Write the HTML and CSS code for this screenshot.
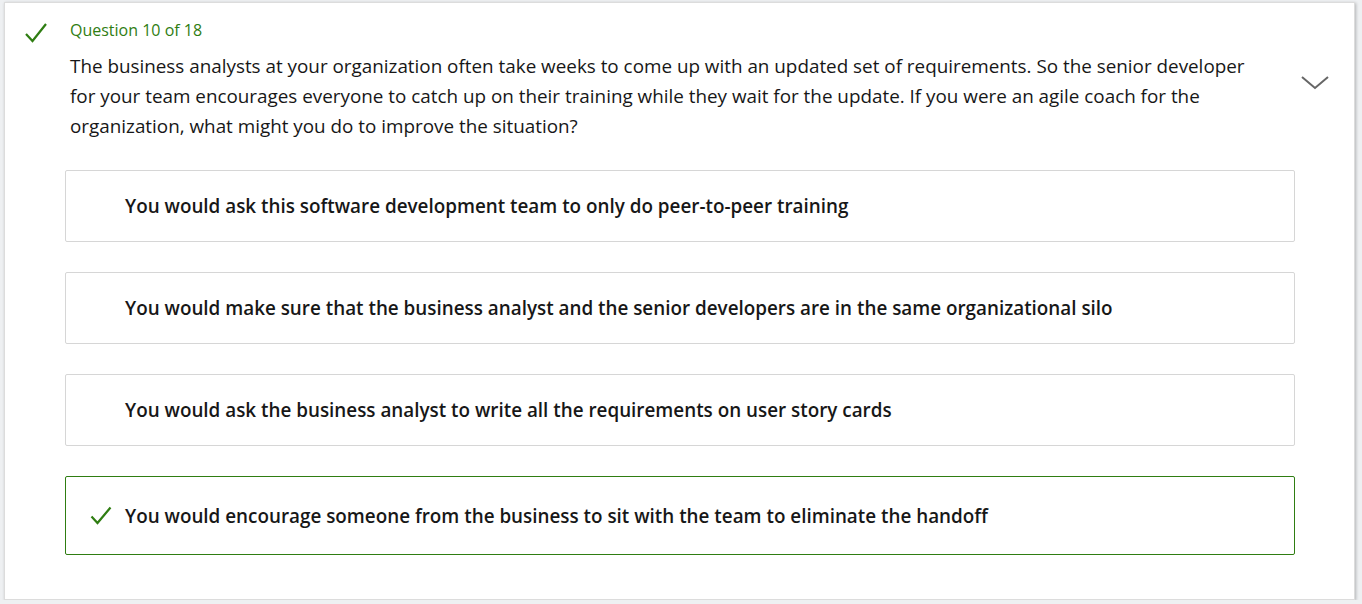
FILE: index.html
```html
<!DOCTYPE html>
<html>
<head>
<meta charset="utf-8">
<link rel="stylesheet" href="styles.css">
</head>
<body>
<div class="card">
  <div class="head">
    <svg class="qcheck" width="24" height="22" viewBox="0 0 24 22"><path d="M2 12 L8.5 19 L22 2" fill="none" stroke="#2f7d12" stroke-width="2.2"/></svg>
    <div class="qbody">
      <div class="qnum">Question 10 of 18</div>
      <p class="qtext">The business analysts at your organization often take weeks to come up with an updated set of requirements. So the senior developer for your team encourages everyone to catch up on their training while they wait for the update. If you were an agile coach for the organization, what might you do to improve the situation?</p>
    </div>
    <svg class="chev" width="28" height="16" viewBox="0 0 28 16"><path d="M1 2 L14 13 L27 2" fill="none" stroke="#666" stroke-width="2"/></svg>
  </div>
  <div class="options">
    <div class="opt"><span class="mark"></span><span class="otext">You would ask this software development team to only do peer-to-peer training</span></div>
    <div class="opt"><span class="mark"></span><span class="otext">You would make sure that the business analyst and the senior developers are in the same organizational silo</span></div>
    <div class="opt"><span class="mark"></span><span class="otext">You would ask the business analyst to write all the requirements on user story cards</span></div>
    <div class="opt correct"><span class="mark"><svg width="22" height="20" viewBox="0 0 22 20"><path d="M1.5 10.5 L7.5 17 L20.5 1.5" fill="none" stroke="#2f7d12" stroke-width="2.2"/></svg></span><span class="otext">You would encourage someone from the business to sit with the team to eliminate the handoff</span></div>
  </div>
</div>
</body>
</html>
```

FILE: styles.css
```css
html, body {
  margin: 0;
  padding: 0;
}
body {
  background: #eef0f2;
  font-family: "Open Sans", "Noto Sans", sans-serif;
  color: #171717;
}
.card {
  box-sizing: border-box;
  margin: 2px 0 0 4px;
  width: 1351px;
  height: 598px;
  background: #fff;
  border: 1px solid #dcdcdc;
  box-shadow: 1px 1px 3px rgba(0,0,0,0.25);
  padding: 16px 0 0 19px;
}
.head {
  display: flex;
  align-items: flex-start;
}
.qcheck {
  margin-top: 3px;
  flex: none;
}
.qbody {
  margin-left: 22px;
  width: 1195px;
  flex: none;
}
.qnum {
  font-size: 16px;
  line-height: 22px;
  color: #2f7d12;
}
.qtext {
  margin: 10px 0 0 0;
  font-size: 18.85px;
  line-height: 30px;
}
.chev {
  flex: none;
  margin: 56px 0 0 36px;
}
.options {
  margin: 29px 0 0 41px;
  width: 1230px;
  display: flex;
  flex-direction: column;
  gap: 30px;
}
.opt {
  box-sizing: border-box;
  height: 72px;
  border: 1px solid #d6d6d6;
  border-radius: 2px;
  display: flex;
  align-items: center;
  padding-left: 24px;
}
.opt.correct {
  height: 79px;
  border-color: #2f7d12;
}
.mark {
  width: 22px;
  height: 20px;
  margin-right: 13px;
  flex: none;
}
.otext {
  font-size: 18.85px;
  font-weight: 600;
  color: #171717;
}
```
